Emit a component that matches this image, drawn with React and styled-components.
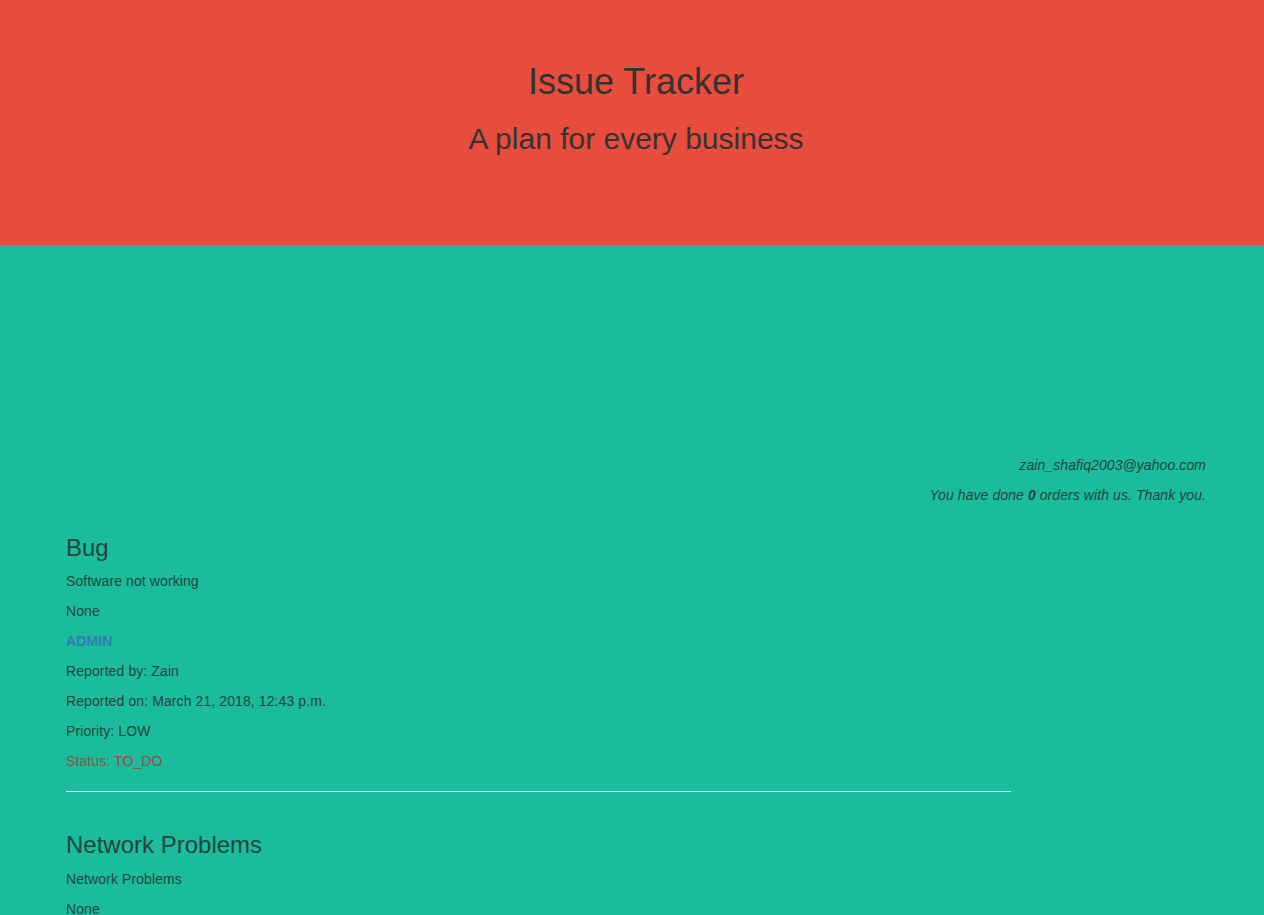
import React from 'react';
import styled, { createGlobalStyle } from 'styled-components';

const GlobalStyle = createGlobalStyle`
   html, body {
      margin: 0;
      padding: 0;
   }
   body {
      font-family: "Liberation Sans", Arial, Helvetica, sans-serif;
      font-size: 14px;
      line-height: 20px;
      color: #333;
      background-color: #1abc9c;
   }
   * {
      box-sizing: border-box;
   }
`;

const Header = styled.header`
   height: 245px;
   padding: 42px 0 0 8px;
   background-color: #e74c3c;
   text-align: center;
   color: #333;

   h1 {
      font-size: 36px;
      font-weight: 500;
      line-height: 1.1;
      margin: 20px 0 10px;
   }
   h2 {
      font-size: 30px;
      font-weight: 500;
      line-height: 1.1;
      margin: 20px 0 10px;
   }
`;

const Main = styled.main`
   padding: 210px 58px 40px 66px;
`;

const Container = styled.div`
   max-width: 1140px;
   margin: 0 auto;
`;

const Account = styled.div`
   text-align: right;
   font-style: italic;
   color: #24443d;
   letter-spacing: 0.08px;
   margin-bottom: 30px;

   p {
      margin: 0 0 10px;
   }
`;

const IssueList = styled.div`
   width: 945px;
`;

const Issue = styled.section`
   color: #24443d;
   letter-spacing: 0.1px;

   h3 {
      font-size: 24px;
      font-weight: 500;
      line-height: 1.1;
      letter-spacing: 0;
      margin: 0 0 10px;
      color: #24443d;
   }
   p {
      margin: 0 0 10px;
   }
`;

const Divider = styled.hr`
   border: 0;
   border-top: 1px solid #eee;
   margin: 20px 0 40px;
`;

const Role = styled.a`
   color: #337ab7;
   font-weight: bold;
   text-decoration: none;
`;

const Status = styled.p`
   color: ${props => props.done ? '#3c763d' : '#9a4d42'};
`;

const issues = [
   {
      title: 'Bug',
      description: 'Software not working',
      assigned: 'None',
      role: 'ADMIN',
      reporter: 'Zain',
      date: 'March 21, 2018, 12:43 p.m.',
      priority: 'LOW',
      status: 'TO_DO',
   },
   {
      title: 'Network Problems',
      description: 'Network Problems',
      assigned: 'None',
      role: 'ADMIN',
      reporter: 'Zain',
      date: 'March 21, 2018, 12:45 p.m.',
      priority: 'LOW',
      status: 'TO_DO',
   },
];

export default function App() {
   return (
      <>
         <GlobalStyle />
         <Header>
            <h1>Issue Tracker</h1>
            <h2>A plan for every business</h2>
         </Header>

         <Main>
            <Container>
               <Account>
                  <p>zain_shafiq2003@yahoo.com</p>
                  <p>You have done <b>0</b> orders with us. Thank you.</p>
               </Account>

               <IssueList>
                  {issues.map((issue, i) => (
                     <Issue key={i}>
                        <h3>{issue.title}</h3>
                        <p>{issue.description}</p>
                        <p>{issue.assigned}</p>
                        <p><Role href="#">{issue.role}</Role></p>
                        <p>Reported by: {issue.reporter}</p>
                        <p>Reported on: {issue.date}</p>
                        <p>Priority: {issue.priority}</p>
                        <Status>Status: {issue.status}</Status>
                        <Divider />
                     </Issue>
                  ))}
               </IssueList>
            </Container>
         </Main>
      </>
   );
}
